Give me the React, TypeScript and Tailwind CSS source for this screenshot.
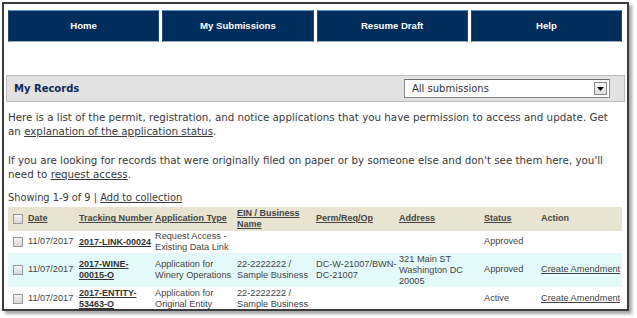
import React from "react";

const navItems = ["Home", "My Submissions", "Resume Draft", "Help"];

const rows = [
  {
    date: "11/07/2017",
    tracking: ["2017-LINK-00024"],
    type: ["Request Access -", "Existing Data Link"],
    ein: [],
    perm: [],
    address: [],
    status: "Approved",
    action: "",
    bg: "bg-white",
    h: "h-[22px]",
  },
  {
    date: "11/07/2017",
    tracking: ["2017-WINE-", "00015-O"],
    type: ["Application for", "Winery Operations"],
    ein: ["22-2222222 /", "Sample Business"],
    perm: ["DC-W-21007/BWN-", "DC-21007"],
    address: ["321 Main ST", "Washington DC", "20005"],
    status: "Approved",
    action: "Create Amendment",
    bg: "bg-[#e4fafa]",
    h: "h-[34px]",
  },
  {
    date: "11/07/2017",
    tracking: ["2017-ENTITY-", "53463-O"],
    type: ["Application for", "Original Entity"],
    ein: ["22-2222222 /", "Sample Business"],
    perm: [],
    address: [],
    status: "Active",
    action: "Create Amendment",
    bg: "bg-white",
    h: "h-[24px]",
  },
];

function Checkbox() {
  return (
    <span className="inline-block w-[10px] h-[10px] border border-[#9a9a9a] bg-gradient-to-b from-[#f4f4f4] to-[#d8d8d8]" />
  );
}

function Lines({ lines, className = "" }: { lines: string[]; className?: string }) {
  return (
    <div className={`leading-[11px] whitespace-nowrap ${className}`}>
      {lines.map((l, i) => (
        <div key={i}>{l}</div>
      ))}
    </div>
  );
}

export default function App() {
  return (
    <div className="w-[637px] h-[318px] bg-white overflow-hidden">
      <div className="ml-[2px] mt-[2px] w-[627px] h-[309px] border-2 border-[#3c3c3c] bg-white shadow-[3px_3px_3px_rgba(0,0,0,0.35)] overflow-hidden">
        {/* top navigation */}
        <div className="flex gap-[3px] pl-[4px] pr-[5px] pt-[6px]">
          {navItems.map((n) => (
            <div
              key={n}
              className="flex-1 h-[32px] bg-[#002d5c] border-t border-t-[#5b8fd0] border-x border-x-[#20497a] border-b border-b-[#9aaac0] flex items-center justify-center text-white font-bold text-[9.6px] [font-family:'Liberation_Sans',Arial,sans-serif]"
            >
              {n}
            </div>
          ))}
        </div>

        {/* My Records bar */}
        <div className="mx-[2px] mt-[33px] h-[27px] bg-[#e2e2e2] border border-[#bdbdbd] flex items-center justify-between pl-[7px] pr-[14px]">
          <span className="text-[#0c2a57] font-bold text-[10px] [font-family:'DejaVu_Sans',Verdana,sans-serif]">
            My Records
          </span>
          <div className="w-[206px] h-[19px] bg-white border border-[#8c8c8c] border-t-[#6e6e6e] flex items-center justify-between pl-[7px] pr-[2px]">
            <span className="text-[10px] text-[#333] [font-family:'DejaVu_Sans',Verdana,sans-serif]">
              All submissions
            </span>
            <span className="w-[13px] h-[13px] border border-[#8a8a8a] bg-gradient-to-b from-[#fafafa] to-[#dcdcdc] flex items-center justify-center">
              <svg width="7" height="4" viewBox="0 0 7 4">
                <path d="M0 0h7L3.5 4z" fill="#111" />
              </svg>
            </span>
          </div>
        </div>

        {/* Paragraphs */}
        <div className="px-[4px] pt-[8px] text-[10.3px] leading-[14px] text-[#3a3a3a] [font-family:'DejaVu_Sans',Verdana,sans-serif]">
          <p>
            Here is a list of the permit, registration, and notice applications that you have permission to access and update. Get an{" "}
            <span className="underline">explanation of the application status</span>.
          </p>
          <p className="mt-[15px]">
            If you are looking for records that were originally filed on paper or by someone else and don't see them here, you'll need to{" "}
            <span className="underline">request access</span>.
          </p>
          <p className="mt-[10px] text-[9.8px]">
            Showing 1-9 of 9 | <span className="underline">Add to collection</span>
          </p>
        </div>

        {/* Table */}
        <div className="ml-[4px] mr-[5px] mt-[2px] text-[9.2px] text-[#444] [font-family:'Liberation_Sans',Arial,sans-serif]">
          <div className="flex items-center h-[24px] bg-[#e9e4d2] font-bold text-[9px] text-[#444] whitespace-nowrap">
            <div className="w-[20px] pl-[5px] flex items-center"><Checkbox /></div>
            <div className="w-[51px] underline">Date</div>
            <div className="w-[76px] underline">Tracking Number</div>
            <div className="w-[82px] underline">Application Type</div>
            <div className="w-[79px] underline leading-[11px]">EIN / Business<br />Name</div>
            <div className="w-[83px] underline">Perm/Req/Op</div>
            <div className="w-[85px] underline">Address</div>
            <div className="w-[57px] underline">Status</div>
            <div className="flex-1">Action</div>
          </div>
          {rows.map((r, i) => (
            <div key={i} className={`flex items-center whitespace-nowrap ${r.h} ${r.bg}`}>
              <div className="w-[20px] pl-[5px] flex items-center"><Checkbox /></div>
              <div className="w-[51px]">{r.date}</div>
              <Lines lines={r.tracking} className="w-[76px] font-bold text-[9px] underline text-[#333]" />
              <Lines lines={r.type} className="w-[82px]" />
              <Lines lines={r.ein} className="w-[79px]" />
              <Lines lines={r.perm} className="w-[83px]" />
              <Lines lines={r.address} className="w-[85px]" />
              <div className="w-[57px]">{r.status}</div>
              <div className="flex-1 underline">{r.action}</div>
            </div>
          ))}
        </div>
      </div>
    </div>
  );
}
